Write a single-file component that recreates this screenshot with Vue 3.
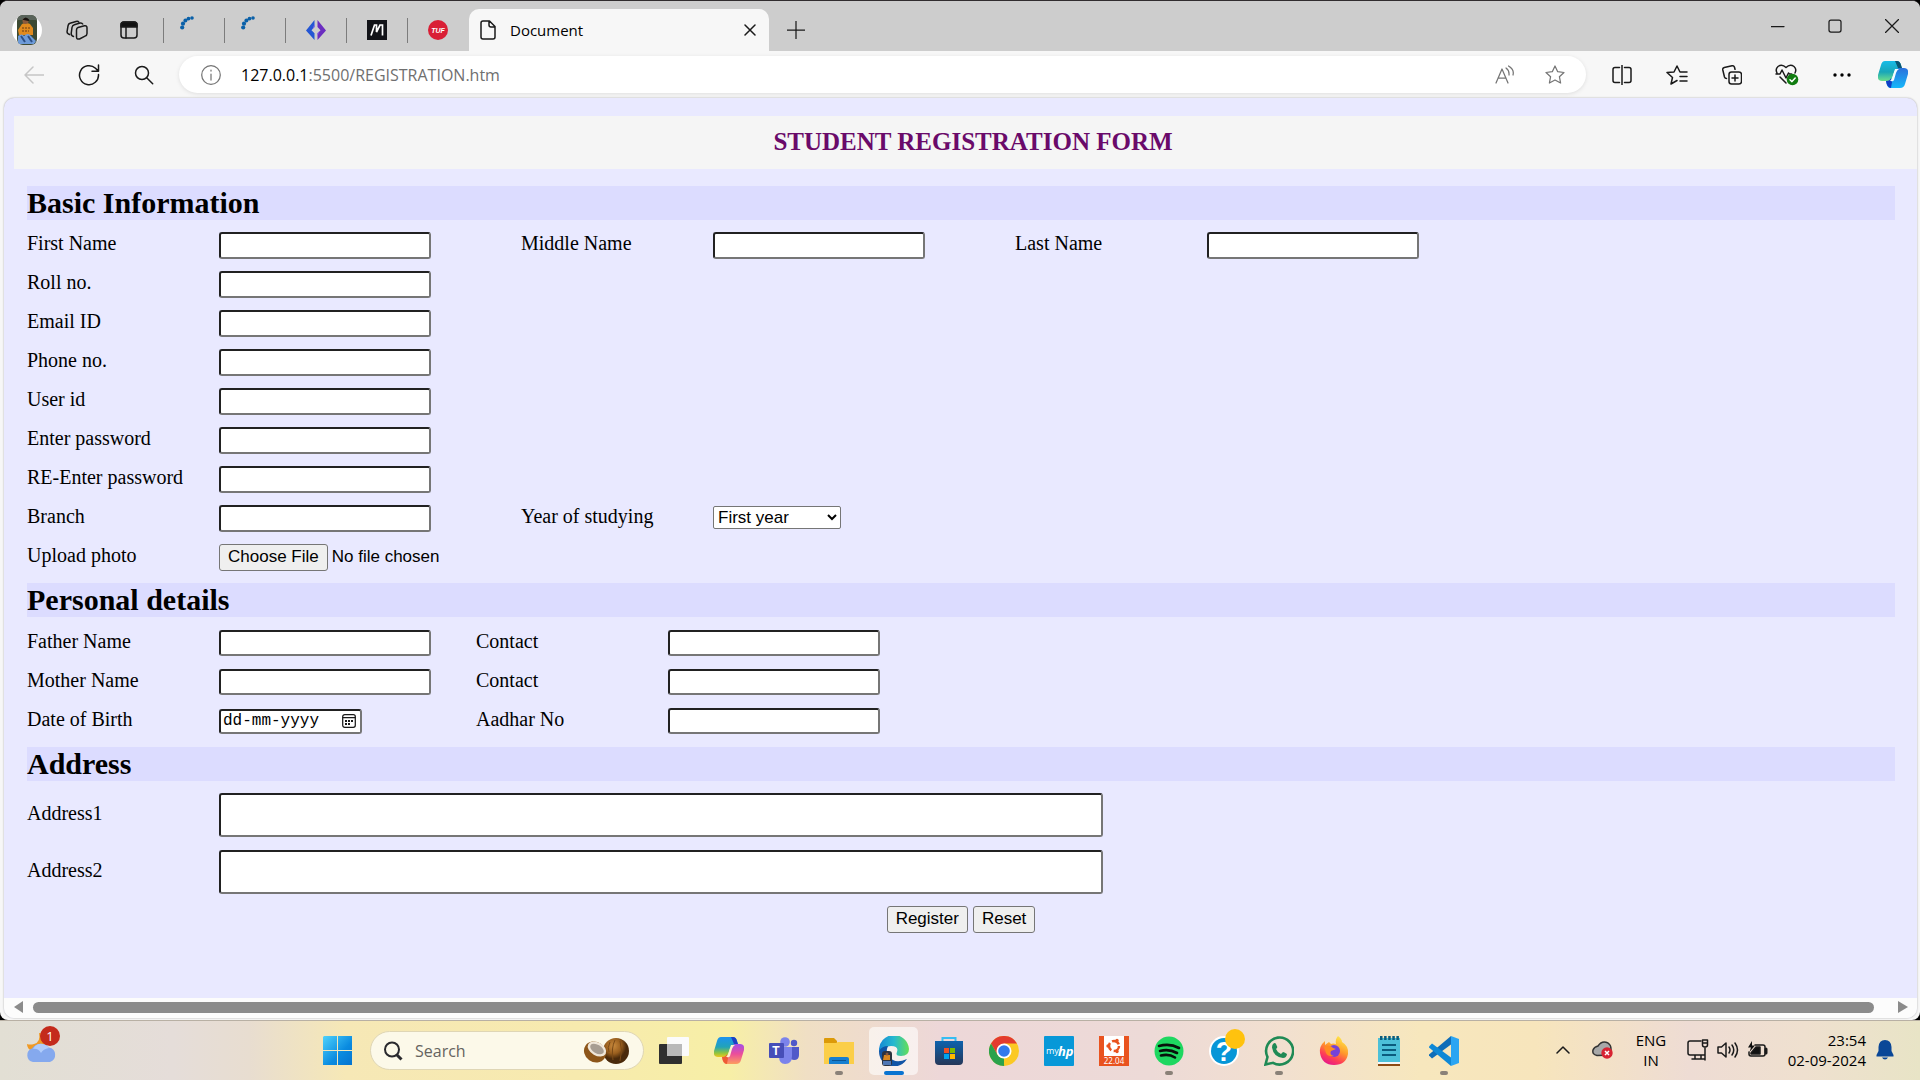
<script setup>
const basicRows = [
  [
    { id: 'first-name', label: 'First Name', type: 'text' },
    { id: 'middle-name', label: 'Middle Name', type: 'text' },
    { id: 'last-name', label: 'Last Name', type: 'text' },
  ],
  [{ id: 'roll', label: 'Roll no.', type: 'text' }],
  [{ id: 'email', label: 'Email ID', type: 'email' }],
  [{ id: 'phone', label: 'Phone no.', type: 'tel' }],
  [{ id: 'user', label: 'User id', type: 'text' }],
  [{ id: 'password', label: 'Enter password', type: 'password' }],
  [{ id: 'password-again', label: 'RE-Enter password', type: 'password' }],
  [
    { id: 'branch', label: 'Branch', type: 'text' },
    { id: 'year', label: 'Year of studying', type: 'select' },
  ],
  [{ id: 'photo', label: 'Upload photo', type: 'file' }],
]
const personalRows = [
  [
    { id: 'father', label: 'Father Name', type: 'text' },
    { id: 'father-contact', label: 'Contact', type: 'tel' },
  ],
  [
    { id: 'mother', label: 'Mother Name', type: 'text' },
    { id: 'mother-contact', label: 'Contact', type: 'tel' },
  ],
  [
    { id: 'birth', label: 'Date of Birth', type: 'date' },
    { id: 'aadhar', label: 'Aadhar No', type: 'text' },
  ],
]
const years = ['First year', 'Second year', 'Third year', 'Final year']
</script>

<template>
  <div class="desktop">
    <div class="browser">
      <header class="tabstrip">
        <button class="cell profile" aria-label="Profile">
          <svg width="30" height="30" viewBox="0 0 30 30">
            <defs><clipPath id="face"><rect x="5" y="0" width="20" height="30" rx="6" /></clipPath></defs>
            <circle cx="15" cy="15" r="15" fill="#fff" />
            <g clip-path="url(#face)">
              <rect width="30" height="30" fill="#3d4a33" />
              <path d="M5 0h20v5H5z" fill="#59635a" />
              <path d="M10 9q4-2 8 0l3 4v7H7l-1-5z" fill="#e08a1e" />
              <path d="M10 13h8M10 16h7" stroke="#6b3d12" stroke-dasharray="2 1" />
              <circle cx="13.500" cy="6" r="3" fill="#8b5a3c" />
              <path d="M10.500 5q3-5 7 0l-1 1-5-1z" fill="#18120f" />
              <path d="M6 21q4-3 6 0 4-4 7 0l5 5-2 3H6z" fill="#6d9ad8" />
              <path d="M9 21l4 6M16 21l4 6" stroke="#2c4f86" stroke-width="2" />
            </g>
          </svg>
        </button>
        <button class="cell" aria-label="Workspaces">
          <svg width="22" height="22" viewBox="0 0 22 22" class="line">
            <path d="M12 8.500l6.500-1.700q2.500-.4 2.500 2v5.700q0 2-2 2.600L13.500 20q-3 .6-3-2v-7q0-2 1.500-2.500z" />
            <path d="M7.500 17.500l-1-.5q-1.500-.8-1.300-2.500L6 8.500q.3-2.200 2.300-2.800L14 4q2-.4 2.700 1" />
            <path d="M3.500 15.500l-1.200-.7q-1.500-.8-1.200-2.500l.9-5.500q.3-2 2-2.500L10 2.500q2-.5 2.800.6" />
          </svg>
        </button>
        <button class="cell vertical" aria-label="Tab actions">
          <svg width="18" height="18" viewBox="0 0 18 18" class="line">
            <rect x="1" y="1" width="16" height="16" rx="3" />
            <path d="M1 4q0-3 3-3h10q3 0 3 3v2H1z" fill="#111" />
            <path d="M6 6v11" />
          </svg>
        </button>
        <button v-for="n in 2" :key="n" class="pin spin" aria-label="Loading tab">
          <svg width="14" height="14" viewBox="0 0 14 14" fill="#0a60a8">
            <circle cx="2.200" cy="11.500" r="2.100" /><circle cx="3" cy="7.700" r="2.100" /><circle cx="5.400" cy="4.500" r="2" /><circle cx="8.500" cy="2.600" r="1.900" /><circle cx="12" cy="2" r="1.800" />
          </svg>
        </button>
        <button class="pin" aria-label="Pinned tab">
          <svg width="20" height="20" viewBox="0 0 20 20">
            <path d="M8.500 0v7l-3 3.200 3 3v6.800L0 10.500z" fill="#2456d4" />
            <path d="M11.500 0v7l3 3.200-3 3v6.800L20 10.500z" fill="#6b2dc0" />
            <path d="M8.500 4v3l-2 2zM11.500 16v-3l2-2z" fill="#8a63ef" />
          </svg>
        </button>
        <button class="pin" aria-label="Pinned tab">
          <svg width="20" height="20" viewBox="0 0 20 20">
            <rect width="20" height="20" fill="#121318" />
            <path d="M4 15.500L7.500 5h2v7L13 5h2.500v10.500" fill="none" stroke="#fff" stroke-width="1.700" />
          </svg>
        </button>
        <button class="pin" aria-label="Pinned tab">
          <svg width="20" height="20" viewBox="0 0 20 20">
            <circle cx="10" cy="10" r="10" fill="#d91f35" />
            <text x="10" y="13" class="tuf">TUF</text>
          </svg>
        </button>
        <div class="tab">
          <svg width="16" height="20" viewBox="0 0 16 20" class="line">
            <path d="M3 1h6.500L15 6.500V17q0 2-2 2H3q-2 0-2-2V3q0-2 2-2zM9 1v4q0 2 2 2h4" />
          </svg>
          <span class="tab-title">Document</span>
          <button class="tab-close" aria-label="Close tab">
            <svg width="12" height="12" viewBox="0 0 12 12" class="line"><path d="M1 1l10 10M11 1L1 11" /></svg>
          </button>
        </div>
        <button class="new-tab" aria-label="New tab">
          <svg width="18" height="18" viewBox="0 0 18 18" class="line thin"><path d="M9 0v18M0 9h18" /></svg>
        </button>
        <div class="window-controls">
          <button aria-label="Minimize"><svg width="14" height="14" viewBox="0 0 14 14" class="line thin"><path d="M0 7.500h13" /></svg></button>
          <button aria-label="Maximize"><svg width="14" height="14" viewBox="0 0 14 14" class="line thin"><rect x="1" y="1" width="12" height="12" rx="2" /></svg></button>
          <button aria-label="Close"><svg width="14" height="14" viewBox="0 0 14 14" class="line thin"><path d="M.5.500l13 13M13.500.5l-13 13" /></svg></button>
        </div>
      </header>

      <nav class="toolbar">
        <button class="tool faded" aria-label="Back">
          <svg width="20" height="18" viewBox="0 0 20 18" class="line"><path d="M20 9H1M9 1L1 9l8 8" /></svg>
        </button>
        <button class="tool" aria-label="Refresh">
          <svg width="22" height="22" viewBox="0 0 22 22" class="line"><path d="M20.500 10.500A9.500 9.500 0 1 1 17.500 4.200L20.200 7M20.500 1v6.300H14" /></svg>
        </button>
        <button class="tool" aria-label="Search">
          <svg width="20" height="20" viewBox="0 0 20 20" class="line"><circle cx="8" cy="8" r="6.500" /><path d="M12.700 12.700l6 6" /></svg>
        </button>
        <div class="address">
          <svg width="20" height="20" viewBox="0 0 20 20" class="line gray"><circle cx="10" cy="10" r="9.300" /><path d="M10 9v6M10 5v1" /></svg>
          <span class="url"><b>127.0.0.1</b>:5500/REGISTRATION.htm</span>
          <button class="pill-icon" aria-label="Read aloud">
            <svg width="20" height="20" viewBox="0 0 20 20" class="line gray"><path d="M1 18L7 4l6 14M3 13h8M11 3q3.500 2.500 3 7M13.500 1q6 3.500 4.500 9" /></svg>
          </button>
          <button class="pill-icon" aria-label="Add to favorites">
            <svg width="20" height="20" viewBox="0 0 20 20" class="line gray"><path d="M10 1l2.700 5.700 6.300.8-4.600 4.200 1.200 6.300-5.600-3-5.600 3 1.200-6.300L1 7.500l6.300-.8z" /></svg>
          </button>
        </div>
        <div class="actions">
          <button aria-label="Split screen">
            <svg width="20" height="20" viewBox="0 0 20 20" class="line"><path d="M7.500 2.500H3q-2 0-2 2v11q0 2 2 2h4.500M12.500 2.500H17q2 0 2 2v11q0 2-2 2h-4.500M10 0v20" /></svg>
          </button>
          <button aria-label="Favorites">
            <svg width="22" height="20" viewBox="0 0 22 20" class="line"><path d="M11 15.500L5 19l1.500-6.500L1 7.500 8 7l3-6 3 6h7M14 11.500h7M14 16h7" /></svg>
          </button>
          <button aria-label="Collections">
            <svg width="20" height="20" viewBox="0 0 20 20" class="line"><rect x="7" y="7" width="12.500" height="12" rx="2.500" /><path d="M13 10v6M10 13h6M4.500 13.500q-1.500 0-2-1.500L.8 5q-.4-2 1.500-2.500L10 .8q2-.4 2.500 1.500l.5 2" /></svg>
          </button>
          <button aria-label="Browser essentials">
            <svg width="24" height="22" viewBox="0 0 24 22" class="line">
              <path d="M2 9q-2-4 1-6.500 4-3 8 1 4-4 8-1 3 2.500 1 6.500M1 10h4l2-4 4 8 2.500-5 1 1h2M5 13l6 6" />
              <circle cx="17.500" cy="15.500" r="5.800" fill="#107c10" stroke="none" /><path d="M15 15.800l2 1.800 3.200-3.600" stroke="#fff" />
            </svg>
          </button>
          <button aria-label="Settings and more">
            <svg width="18" height="4" viewBox="0 0 18 4"><circle cx="2" cy="2" r="1.700" /><circle cx="9" cy="2" r="1.700" /><circle cx="16" cy="2" r="1.700" /></svg>
          </button>
          <button class="copilot" aria-label="Copilot">
            <svg width="30" height="28" viewBox="0 0 30 28">
              <defs>
                <linearGradient id="cp1" x2="0" y2="1"><stop stop-color="#18bce8" /><stop offset=".55" stop-color="#19a6b8" /><stop offset="1" stop-color="#6ee08c" /></linearGradient>
                <linearGradient id="cp2" x2="0" y2="1"><stop stop-color="#2a70dc" /><stop offset="1" stop-color="#16b8fa" /></linearGradient>
              </defs>
              <path d="M7 0h12q3 0 4 4l1 4h-4q-3 0-4 3l-2 6q-1 3-4 3H4q-5 0-4-6l3-10q1-4 4-4z" fill="url(#cp1)" />
              <path d="M17 0h2q3 0 4 4l1 3h-4z" fill="#0b5470" />
              <path d="M8 20h3q3 0 4-3l2-6q1-4 5-4h4q5 0 4 6l-3 10q-1 4-5 4H12q-3 0-4-7z" fill="url(#cp2)" />
              <path d="M8 20q4 0 5-3l1 4-1 6q-4 0-5-7z" fill="#103fc4" />
              <path d="M17 8h4q-2 1-3 4l-2 7q-1 2-3 1h-1q2-1 3-5z" fill="#f4fbff" />
            </svg>
          </button>
        </div>
      </nav>

      <div class="viewport">
        <main class="page">
          <h1>STUDENT REGISTRATION FORM</h1>
          <form @submit.prevent>
            <h2>Basic Information</h2>
            <section class="rows">
              <div v-for="(row, i) in basicRows" :key="i" class="row">
                <div v-for="field in row" :key="field.id" class="field">
                  <label :for="field.id">{{ field.label }}</label>
                  <select v-if="field.type === 'select'" :id="field.id">
                    <option v-for="year in years" :key="year">{{ year }}</option>
                  </select>
                  <input v-else :id="field.id" :type="field.type" :class="field.type === 'file' ? 'file' : 'box'">
                </div>
              </div>
            </section>
            <h2>Personal details</h2>
            <section class="rows personal">
              <div v-for="(row, i) in personalRows" :key="i" class="row">
                <div v-for="field in row" :key="field.id" class="field">
                  <label :for="field.id">{{ field.label }}</label>
                  <div v-if="field.type === 'date'" class="date">
                    <input :id="field.id" type="text" placeholder="dd-mm-yyyy">
                    <button type="button" aria-label="Show calendar">
                      <svg width="14" height="14" viewBox="0 0 14 14" class="line thin"><rect x=".7" y=".7" width="12.600" height="12.600" rx="2" /><path d="M1 3.500h12" /><path d="M3 6h2v2H3zM6 6h2v2H6zM9 6h2v2H9zM3 9h2v2H3zM6 9h2v2H6z" fill="#1a1a1a" stroke="none" /></svg>
                    </button>
                  </div>
                  <input v-else :id="field.id" :type="field.type" class="box">
                </div>
              </div>
            </section>
            <h2>Address</h2>
            <section class="rows addresses">
              <div v-for="n in 2" :key="n" class="field">
                <label :for="'address' + n">Address{{ n }}</label>
                <input :id="'address' + n" type="text" class="box wide">
              </div>
            </section>
            <div class="submit">
              <button type="submit">Register</button>
              <button type="reset">Reset</button>
            </div>
          </form>
        </main>
        <div class="scrollbar">
          <svg width="10" height="12" viewBox="0 0 10 12"><path d="M9 0v12L0 6z" fill="#8b8b8b" /></svg>
          <div class="thumb"></div>
          <svg width="10" height="12" viewBox="0 0 10 12"><path d="M0 0v12l10-6z" fill="#8b8b8b" /></svg>
        </div>
      </div>
    </div>

    <footer class="taskbar">
      <div class="widgets">
        <button class="weather" aria-label="Weather">
          <svg width="32" height="30" viewBox="0 0 32 30">
            <path d="M13 0q2 9-5 11-4 1-7 0 0 5 5 7h14V4q-3-4-7-4z" fill="#f09a25" />
            <path d="M7 29a7 7 0 0 1-1-13.500 10 9 0 0 1 17-1A7.500 7.500 0 0 1 24 29z" fill="#85a9ee" />
            <path d="M9 13a9 8 0 0 1 14 2q-6 1-8 5-3-5-8-4z" fill="#b1cdfb" />
          </svg>
          <span class="badge">1</span>
        </button>
      </div>
      <div class="apps">
        <button class="app" aria-label="Start">
          <svg width="30" height="30" viewBox="0 0 30 30">
            <defs><linearGradient id="win" x2="1" y2="1"><stop stop-color="#4fd2fb" /><stop offset=".6" stop-color="#0a8be0" /><stop offset="1" stop-color="#0473cf" /></linearGradient></defs>
            <path d="M1 0h13v14H0V1zM15 0h14v14H15zM0 15h14v14H0zM15 15h14v14H15z" fill="url(#win)" />
          </svg>
        </button>
        <label class="search">
          <svg width="20" height="20" viewBox="0 0 20 20" fill="none" stroke="#2a2a2e" stroke-width="2"><circle cx="9" cy="8.500" r="7" /><path d="M13.500 13.500l5 5" stroke-width="3" /></svg>
          <input type="text" placeholder="Search" aria-label="Search">
          <svg width="46" height="28" viewBox="0 0 46 28">
            <defs><radialGradient id="nut" cx=".4" cy=".3"><stop stop-color="#c98a3d" /><stop offset=".6" stop-color="#9a5f1e" /><stop offset="1" stop-color="#4a2a0b" /></radialGradient></defs>
            <ellipse cx="33" cy="14" rx="13" ry="13" fill="url(#nut)" />
            <path d="M32 3q-4 8-2 20M37 4q3 9 0 20M27 5q-3 6-1 10" stroke="#7a4a17" fill="none" />
            <ellipse cx="12" cy="15" rx="11.500" ry="10" transform="rotate(35 12 15)" fill="#8d5619" />
            <ellipse cx="14" cy="12" rx="10" ry="6.500" transform="rotate(30 14 12)" fill="#efe6d8" />
            <ellipse cx="14" cy="12" rx="7.500" ry="4.200" transform="rotate(30 14 12)" fill="#a79d92" />
          </svg>
        </label>
        <button class="app" aria-label="Task view">
          <svg width="30" height="30" viewBox="0 0 30 30"><rect y="8" width="23" height="20" rx="1" fill="#2f2f2f" /><rect x="8" y="1" width="22" height="19" rx="1" fill="#fbfbfb" /><path d="M8 8h15v12H8z" fill="#b9b9b9" /></svg>
        </button>
        <button class="app" aria-label="Copilot">
          <svg width="30" height="28" viewBox="0 0 30 28">
            <defs>
              <linearGradient id="cc1" x2="0" y2="1"><stop stop-color="#1c93f0" /><stop offset=".5" stop-color="#22a3b8" /><stop offset=".8" stop-color="#8fc43e" /><stop offset="1" stop-color="#efc71d" /></linearGradient>
              <linearGradient id="cc2" x2="0" y2="1"><stop stop-color="#a44de8" /><stop offset=".5" stop-color="#ec4e9a" /><stop offset="1" stop-color="#fd9e5e" /></linearGradient>
            </defs>
            <path d="M7 0h12q3 0 4 4l1 4h-4q-3 0-4 3l-2 6q-1 3-4 3H4q-5 0-4-6l3-10q1-4 4-4z" fill="url(#cc1)" />
            <path d="M17 0h2q3 0 4 4l1 3h-4z" fill="#1c3fc4" />
            <path d="M8 20h3q3 0 4-3l2-6q1-4 5-4h4q5 0 4 6l-3 10q-1 4-5 4H12q-3 0-4-7z" fill="url(#cc2)" />
            <path d="M8 20q4 0 5-3l1 4-1 6q-4 0-5-7z" fill="#ee5b34" />
            <path d="M17 8h4q-2 1-3 4l-2 7q-1 2-3 1h-1q2-1 3-5z" fill="#fbf3cf" />
          </svg>
        </button>
        <button class="app" aria-label="Teams">
          <svg width="30" height="28" viewBox="0 0 30 28">
            <circle cx="25" cy="6" r="3.200" fill="#5059c9" /><circle cx="16" cy="5" r="4.800" fill="#7b83eb" />
            <path d="M21 10h9v8q0 5-5 5-3 0-4-2z" fill="#5059c9" />
            <path d="M10 10h13v9q0 8-7 8-6 0-6-8z" fill="#7b83eb" />
            <rect y="6" width="15" height="15" rx="1" fill="#464eb8" /><text x="7" y="18" class="teams">T</text>
          </svg>
        </button>
        <button class="app running" aria-label="File Explorer">
          <svg width="30" height="28" viewBox="0 0 30 28">
            <path d="M0 2q0-1 1-1h9l3 3v4H0z" fill="#dc9a09" /><path d="M0 6h12l2-1h16v22H0z" fill="#fbce48" />
            <path d="M5 27v-5q0-2 2-2h16q2 0 2 2v5z" fill="#167fd0" /><path d="M8 23.500h14" stroke="#0a5594" />
          </svg>
        </button>
        <button class="app active" aria-label="Microsoft Edge">
          <svg width="30" height="30" viewBox="0 0 30 30">
            <defs><linearGradient id="edge"><stop stop-color="#1689d4" /><stop offset=".5" stop-color="#27b9cf" /><stop offset="1" stop-color="#64df56" /></linearGradient></defs>
            <path d="M0 15a15 15 0 0 1 30-2q0 7-8 7-6 0-4-4 2-6-6-6-7 0-9 9z" fill="url(#edge)" />
            <path d="M0 15q3-5 9-5-4 9 5 14 5 3 14-1-6 9-16 7Q0 27 0 15z" fill="#1155a6" />
            <rect x="3" y="15" width="10" height="15" rx="3" fill="#2c3340" /><path d="M5 19h6v5H4z" fill="#d98720" /><circle cx="8" cy="18" r="1.500" fill="#85543b" /><path d="M4 25h8v4H4z" fill="#4f77b5" />
          </svg>
        </button>
        <button class="app" aria-label="Microsoft Store">
          <svg width="30" height="30" viewBox="0 0 30 30">
            <defs><linearGradient id="store" x2="0" y2="1"><stop stop-color="#0e62ad" /><stop offset="1" stop-color="#253759" /></linearGradient></defs>
            <path d="M8.500 6V2h13v4" fill="none" stroke="#35bdf2" stroke-width="2" /><path d="M1 5h28v20q0 4-4 4H5q-4 0-4-4z" fill="url(#store)" />
            <path d="M10 12h5v5h-5z" fill="#f25022" /><path d="M16 12h5v5h-5z" fill="#7fba00" /><path d="M10 18h5v5h-5z" fill="#00a4ef" /><path d="M16 18h5v5h-5z" fill="#ffb900" />
          </svg>
        </button>
        <button class="app" aria-label="Chrome">
          <svg width="30" height="30" viewBox="0 0 30 30">
            <circle cx="15" cy="15" r="15" fill="#fbc924" /><path d="M2 7.500A15 15 0 0 1 28 7.500H15L8.500 18.800z" fill="#e33b2e" />
            <path d="M2 7.500L8.500 18.800q2.500 4 8 3.500L15 30A15 15 0 0 1 2 7.500z" fill="#2ba24c" /><path d="M15 30l6.500-11.200H15z" fill="#fbc924" />
            <circle cx="15" cy="15" r="7.500" fill="#fff" /><circle cx="15" cy="15" r="5.800" fill="#3079ec" />
          </svg>
        </button>
        <button class="app" aria-label="myHP">
          <svg width="30" height="30" viewBox="0 0 30 30"><rect width="30" height="30" rx="1" fill="#0798d8" /><text x="2" y="18" class="my">my</text><text x="14" y="20" class="hp">hp</text></svg>
        </button>
        <button class="app" aria-label="Ubuntu 22.04">
          <svg width="30" height="30" viewBox="0 0 30 30">
            <rect width="30" height="30" fill="#e9531f" /><path d="M5 0h20v20H5z" fill="#fff" />
            <circle cx="15" cy="10" r="5" fill="none" stroke="#e9531f" stroke-width="2.500" stroke-dasharray="8 2.470" /><circle cx="9" cy="10" r="1.700" fill="#e9531f" /><circle cx="18" cy="4.500" r="1.700" fill="#e9531f" /><circle cx="18" cy="15.500" r="1.700" fill="#e9531f" />
            <text x="15" y="28" class="version">22.04</text>
          </svg>
        </button>
        <button class="app running" aria-label="Spotify">
          <svg width="30" height="30" viewBox="0 0 30 30"><circle cx="15" cy="15" r="14.500" fill="#1ed760" /><path d="M5 10q11-3 20 2M6 15q9-2.500 17 2M7 19.500q8-2 14 2" fill="none" stroke="#08110b" stroke-width="2.600" stroke-linecap="round" /></svg>
        </button>
        <button class="app help" aria-label="Help">
          <svg width="30" height="30" viewBox="0 0 30 30"><circle cx="15" cy="15" r="15" fill="#fff" /><circle cx="15" cy="15" r="13" fill="#0796d7" /><text x="15" y="25" class="question">?</text></svg>
          <span class="dot"></span>
        </button>
        <button class="app running" aria-label="WhatsApp">
          <svg width="30" height="30" viewBox="0 0 30 30">
            <path d="M1.500 28.500l2-7.500A13.500 13.500 0 1 1 9 26.800z" fill="none" stroke="#1f8a55" stroke-width="2.600" />
            <path d="M9 8q2-2 3 0l1.300 3q0 1-1.300 2 1 3 5 5l2-2q1 0 4 2-.5 4-4 4Q9.500 21 8 11.500 8 9 9 8z" fill="#1f8a55" />
          </svg>
        </button>
        <button class="app" aria-label="Firefox">
          <svg width="30" height="30" viewBox="0 0 30 30">
            <defs><linearGradient id="fox" x1=".8" x2=".3" y2="1"><stop stop-color="#fff04a" /><stop offset=".45" stop-color="#ff9a2b" /><stop offset=".75" stop-color="#ff3f55" /><stop offset="1" stop-color="#e5168d" /></linearGradient></defs>
            <path d="M19 0q4 3 4 6 7 4 6 12-2 11-14 11T1 17q-1-7 5-12v4l4-3 2 2q2-1 5 0-1-5 2-8z" fill="url(#fox)" />
            <circle cx="15" cy="15" r="6" fill="#7642d8" /><path d="M5 11q6-3 9 1l3 1-5 2q-2 4 3 5-6 1-8-3z" fill="#ff8b23" />
          </svg>
        </button>
        <button class="app" aria-label="Notepad">
          <svg width="24" height="30" viewBox="0 0 24 30">
            <path d="M1 2h22v26H1z" fill="#4cc0d8" /><path d="M1 26h22v2H1z" fill="#f6f6f6" /><path d="M1 28h22v2H1z" fill="#8d4a12" />
            <path d="M5 9h14M5 14h14M5 19h14" stroke="#0b5c7d" stroke-width="2" /><path d="M3 2h19" stroke="#0b5c7d" stroke-width="4" stroke-dasharray="2.500 1.600" />
          </svg>
        </button>
        <button class="app running" aria-label="Visual Studio Code">
          <svg width="30" height="30" viewBox="0 0 30 30"><path d="M22 0l8 3v24l-8 3z" fill="#2ba5f2" /><path d="M22 0v8.500L3 22.500l-3-3v-1z" fill="#0f6db8" /><path d="M22 30v-8.500L3 7.500l-3 3v1z" fill="#0f88d6" /></svg>
        </button>
      </div>
      <div class="tray">
        <button class="chevron" aria-label="Show hidden icons"><svg width="14" height="9" viewBox="0 0 14 9" class="line"><path d="M1 8l6-6 6 6" /></svg></button>
        <button class="cloud" aria-label="OneDrive">
          <svg width="22" height="18" viewBox="0 0 22 18"><path d="M5 14.500Q0 13.500 1 9q1-3 5-4 4-6 10-3 3 2 3 6v6z" fill="#a8a8a8" stroke="#333" stroke-width="1.500" /><circle cx="15" cy="12" r="5.700" fill="#d82332" /><path d="M13 10l4 4M17 10l-4 4" stroke="#fff" stroke-width="1.500" /></svg>
        </button>
        <button class="language"><span>ENG</span><span>IN</span></button>
        <button class="status" aria-label="Network, sound and battery">
          <svg width="22" height="22" viewBox="0 0 22 22" class="line"><path d="M14 2H3Q1 2 1 4v10q0 2 2 2h14M5 20h12M8 16v4M14 16v4M18 9v12" /><path d="M15.500 1h5v5q0 2-2.500 2t-2.500-2zM15.500 4h5" /></svg>
          <svg width="22" height="18" viewBox="0 0 22 18" class="line"><path d="M1 6h3.500L9 2v14l-4.500-4H1zM12 6q2 3 0 6M15 4q3.500 5 0 10M18 2q5 7 0 14" /></svg>
          <svg width="22" height="18" viewBox="0 0 22 18" class="line"><path d="M8 4h8q2 0 2 2v7q0 2-2 2H4q-2 0-2-2v-2" /><path d="M9 6h4v7H4v-1z" fill="#111" /><path d="M5 0L1 6.500h3L2.500 11 8 4.500H5z" fill="#111" stroke="none" /><path d="M19 8v4" stroke-width="3" /></svg>
        </button>
        <button class="clock"><time>23:54</time><time>02-09-2024</time></button>
        <button class="bell" aria-label="Notifications"><svg width="18" height="20" viewBox="0 0 18 20" fill="#0a4797"><path d="M9 0q6 0 6.500 7v4l2 4v1.500H.5V15l2-4V7Q3 0 9 0zM6 17.500h6q-1 2-3 2t-3-2z" /></svg></button>
      </div>
    </footer>
  </div>
</template>

<style>
body {
  margin: 0;
  background: #000;
}
</style>

<style scoped>
* {
  box-sizing: border-box;
}
.desktop {
  display: flex;
  flex-direction: column;
  min-height: 100vh;
  background: #000;
  color: #000;
  font-family: "Open Sans", "Noto Sans", sans-serif;
}
svg {
  display: block;
  flex: none;
}
button {
  margin: 0;
  padding: 0;
  border: 0;
  background: none;
  color: inherit;
  font: inherit;
}
.line {
  fill: none;
  stroke: #1a1a1a;
  stroke-width: 1.5;
  stroke-linecap: round;
  stroke-linejoin: round;
}
.thin {
  stroke-width: 1.25;
}
.gray {
  stroke: #757575;
  stroke-width: 1.25;
}
.faded .line {
  stroke: #c6c6c6;
}
.browser {
  display: flex;
  flex: 1;
  flex-direction: column;
  overflow: hidden;
  border-top: 1px solid #302c2e;
  border-radius: 8px;
  background: #f7f7f7;
}

/* Tab strip */
.tabstrip {
  display: flex;
  align-items: stretch;
  height: 50px;
  padding-left: 2px;
  background: #cdcdcd;
}
.tabstrip > button {
  display: flex;
  align-items: center;
  justify-content: center;
  padding-top: 8px;
}
.cell {
  width: 50px;
}
.vertical {
  width: 54px;
  margin-right: 7px;
}
.pin {
  width: 61px;
}
.tabstrip > .pin {
  background: linear-gradient(#7c7c7c, #7c7c7c) left 17px / 1px 25px no-repeat;
}
.tabstrip > .spin {
  align-items: flex-start;
  justify-content: flex-start;
  padding: 15px 0 0 17px;
}
.tuf {
  fill: #fff;
  font: italic bold 7px "Liberation Sans", sans-serif;
  text-anchor: middle;
}
.tab {
  display: flex;
  align-items: center;
  width: 300px;
  margin: 8px 0 0 1px;
  padding: 0 13px 0 11px;
  border-radius: 10px 10px 0 0;
  background: #f7f7f7;
}
.tab-title {
  flex: 1;
  padding-left: 14px;
  font-size: 15px;
  line-height: 20px;
}
.new-tab {
  width: 54px;
}
.window-controls {
  display: flex;
  margin-left: auto;
}
.window-controls button {
  display: flex;
  align-items: center;
  justify-content: center;
  width: 57px;
}

/* Address row */
.toolbar {
  display: flex;
  align-items: center;
  height: 47px;
  padding: 0 4px 0 6px;
}
.toolbar button {
  display: flex;
  align-items: center;
  justify-content: center;
  width: 55px;
}
.address {
  display: flex;
  flex: 1;
  align-items: center;
  height: 37px;
  margin-left: 8px;
  padding: 0 6px 0 22px;
  border-radius: 20px;
  background: #fff;
  box-shadow: 0 1px 4px #0000001a;
}
.url {
  flex: 1;
  padding-left: 20px;
  color: #6f6f6f;
  font-size: 16px;
}
.url b {
  color: #000;
  font-weight: 400;
}
.address .pill-icon {
  width: 50px;
}
.actions {
  display: flex;
  align-items: center;
  padding-left: 8px;
}
.actions .copilot {
  width: 47px;
}

/* Web page */
.viewport {
  display: flex;
  flex: 1;
  flex-direction: column;
  margin: 0 3px 2px 4px;
  overflow: hidden;
  border-radius: 10px;
  background: #e9e9ff;
  box-shadow: 0 0 2px #00000055;
}
.page {
  flex: 1;
  padding: 18px 0 0 10px;
  font-family: "Liberation Serif", serif;
  font-size: 20px;
}
h1 {
  margin: 0 -15px 17px 0;
  padding: 11px 0 13px;
  background: #f5f5f5;
  color: #6a0a6a;
  font-size: 25px;
  line-height: 29px;
  text-align: center;
}
form {
  margin: 0 22px 0 13px;
}
h2 {
  margin: 0;
  background: #dcdcff;
  font-size: 30px;
  line-height: 34px;
}
.rows {
  display: flex;
  flex-direction: column;
  gap: 12px;
  padding: 12px 0;
}
.row {
  display: flex;
  gap: 90px;
}
.field {
  display: flex;
  align-items: center;
  min-height: 27px;
}
.field label {
  width: 192px;
  padding-bottom: 4px;
  line-height: 23px;
}
.box,
.date {
  width: 212px;
  height: 27px;
  margin: 0;
  padding: 1px 2px;
  border: 2px solid;
  border-color: #212121 #767676 #767676 #212121;
  border-radius: 3px;
  outline: 0;
  background: #fff;
  font: 17px "Liberation Sans", sans-serif;
}
.personal {
  gap: 13px;
  padding: 13px 0;
}
.personal .row {
  gap: 45px;
}
.personal .field {
  min-height: 26px;
  max-height: 26px;
}
.personal .box {
  height: 26px;
}
.date {
  display: flex;
  align-items: center;
  width: 143px;
  height: 25px;
  margin-right: 69px;
  padding: 0 4px 0 2px;
}
.date input {
  flex: 1;
  width: 0;
  padding: 0;
  border: 0;
  outline: 0;
  font: 16px "Liberation Mono", monospace;
}
.date input::placeholder {
  color: #000;
}
.addresses {
  gap: 13px;
}
.box.wide {
  width: 884px;
  height: 44px;
}
select {
  width: 128px;
  height: 23px;
  margin: 0 0 2px;
  padding: 0;
  border: 1px solid #767676;
  border-radius: 2px;
  background-color: #fff;
  color: #000;
  font: 17px "Liberation Sans", sans-serif;
}
.file {
  height: 27px;
  font: 17px "Liberation Sans", sans-serif;
}
.file::file-selector-button,
.submit button {
  height: 27px;
  padding: 0 8px 2px;
  border: 1px solid #767676;
  border-radius: 3px;
  background: #efefef;
  color: #000;
  font: 17px "Liberation Sans", sans-serif;
}
.submit {
  display: flex;
  gap: 5px;
  justify-content: center;
}
.scrollbar {
  display: flex;
  gap: 9px;
  align-items: center;
  height: 20px;
  padding: 0 9px 2px 10px;
  background: #fcfcfc;
}
.thumb {
  flex: 1;
  height: 11px;
  margin-right: 15px;
  border-radius: 6px;
  background: #8b8b8b;
}

/* Taskbar */
.taskbar {
  display: flex;
  align-items: center;
  height: 60px;
  border-top: 1px solid #b8b0a4;
  background: linear-gradient(90deg, #e2dfd4 0%, #e5ddd9 9%, #e8ddd0 13%, #f6e8b6 18%, #f7eaae 30%, #f7efa6 38%, #f0dfc4 42%, #edd7d8 49%, #eddad7 60%, #f2e0cf 67%, #f7e7bd 74%, #f7e5bc 80%, #eedcd4 88%, #efe0cf 94%, #e8e4c6 100%);
}
.widgets {
  width: 310px;
  padding-left: 26px;
}
.weather {
  position: relative;
}
.badge {
  position: absolute;
  top: -7px;
  left: 14px;
  width: 20px;
  height: 20px;
  border-radius: 50%;
  background: #c42b1c;
  color: #fff;
  font-size: 13px;
  line-height: 20px;
  text-align: center;
}
.apps {
  display: flex;
  flex: 1;
  align-items: center;
}
.app {
  display: flex;
  position: relative;
  align-items: center;
  justify-content: center;
  width: 55px;
  height: 48px;
}
.active::before {
  position: absolute;
  z-index: 0;
  inset: 0 3px;
  border-radius: 5px;
  background: #ffffff99;
  content: "";
}
.app svg {
  position: relative;
}
.running::after,
.active::after {
  position: absolute;
  bottom: 0;
  left: 50%;
  width: 8px;
  height: 4px;
  margin-left: -4px;
  border-radius: 2px;
  background: #8a8178;
  content: "";
}
.active::after {
  width: 20px;
  margin-left: -10px;
  background: #0a74d1;
}
.teams,
.my,
.hp,
.version,
.question {
  fill: #fff;
  font: bold 12px "Liberation Sans", sans-serif;
  text-anchor: middle;
}
.my {
  font: 9px "Open Sans", sans-serif;
  text-anchor: start;
}
.hp {
  font: italic bold 13px "Open Sans", sans-serif;
  text-anchor: start;
}
.version {
  font: 8px "Noto Sans", sans-serif;
}
.question {
  font-size: 27px;
}
.dot {
  position: absolute;
  top: 2px;
  right: 6px;
  width: 20px;
  height: 20px;
  border-radius: 50%;
  background: #ffc20e;
}
.search {
  display: flex;
  align-items: center;
  width: 274px;
  height: 39px;
  margin: 0 2px 0 5px;
  padding: 0 14px 0 12px;
  border: 1px solid #dfd6b5;
  border-radius: 20px;
  background: #fcf9e9;
}
.search input {
  flex: 1;
  width: 0;
  padding: 0 0 0 12px;
  border: 0;
  outline: 0;
  background: none;
  font: 16px "Open Sans", sans-serif;
}
.search input::placeholder {
  color: #66645f;
}
.tray {
  display: flex;
  align-items: center;
  padding: 0 26px 2px 0;
  font-size: 15px;
  line-height: 20px;
}
.tray button {
  display: flex;
  justify-content: center;
}
.chevron {
  width: 40px;
}
.cloud {
  width: 39px;
}
.tray .language {
  flex-direction: column;
  align-items: center;
  width: 58px;
}
.tray .status {
  gap: 8px;
  align-items: center;
  padding-left: 7px;
}
.tray .clock {
  flex-direction: column;
  align-items: flex-end;
  width: 97px;
}
.bell {
  padding-left: 10px;
}
</style>
